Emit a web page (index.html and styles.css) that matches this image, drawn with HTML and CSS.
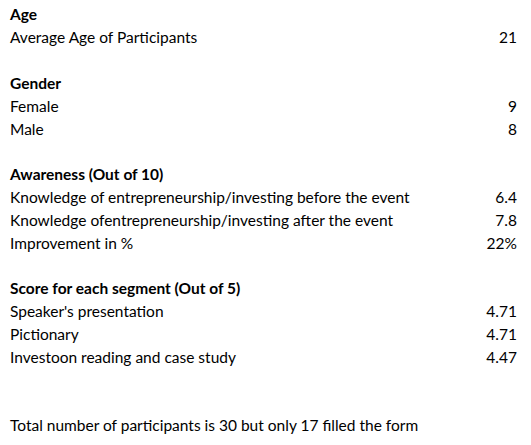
FILE: index.html
```html
<!DOCTYPE html>
<html>
<head>
<meta charset="utf-8">
<link rel="stylesheet" href="styles.css">
</head>
<body>
<div class="sheet">
  <div class="row head"><span>Age</span><span></span></div>
  <div class="row"><span>Average Age of Participants</span><span class="num">21</span></div>
  <div class="row blank"></div>
  <div class="row head"><span>Gender</span><span></span></div>
  <div class="row"><span>Female</span><span class="num">9</span></div>
  <div class="row"><span>Male</span><span class="num">8</span></div>
  <div class="row blank"></div>
  <div class="row head"><span>Awareness (Out of 10)</span><span></span></div>
  <div class="row"><span>Knowledge of entrepreneurship/investing before the event</span><span class="num">6.4</span></div>
  <div class="row"><span>Knowledge ofentrepreneurship/investing after the event</span><span class="num">7.8</span></div>
  <div class="row"><span>Improvement in %</span><span class="num">22%</span></div>
  <div class="row blank"></div>
  <div class="row head"><span>Score for each segment (Out of 5)</span><span></span></div>
  <div class="row"><span>Speaker's presentation</span><span class="num">4.71</span></div>
  <div class="row"><span>Pictionary</span><span class="num">4.71</span></div>
  <div class="row"><span>Investoon reading and case study</span><span class="num">4.47</span></div>
  <div class="row blank"></div>
  <div class="row blank"></div>
  <div class="row"><span>Total number of participants is 30 but only 17 filled the form</span><span></span></div>
</div>
</body>
</html>
```
FILE: styles.css
```css
html, body {
  margin: 0;
  padding: 0;
  background: #ffffff;
}
.sheet {
  width: 507px;
  padding: 3px 0 0 10px;
  font-family: "Lato", "Open Sans", sans-serif;
  font-size: 15.5px;
  color: #000000;
}
.row {
  display: flex;
  justify-content: space-between;
  align-items: center;
  height: 22.83px;
  white-space: nowrap;
}
.head {
  font-weight: bold;
}
.num {
  text-align: right;
}
```
